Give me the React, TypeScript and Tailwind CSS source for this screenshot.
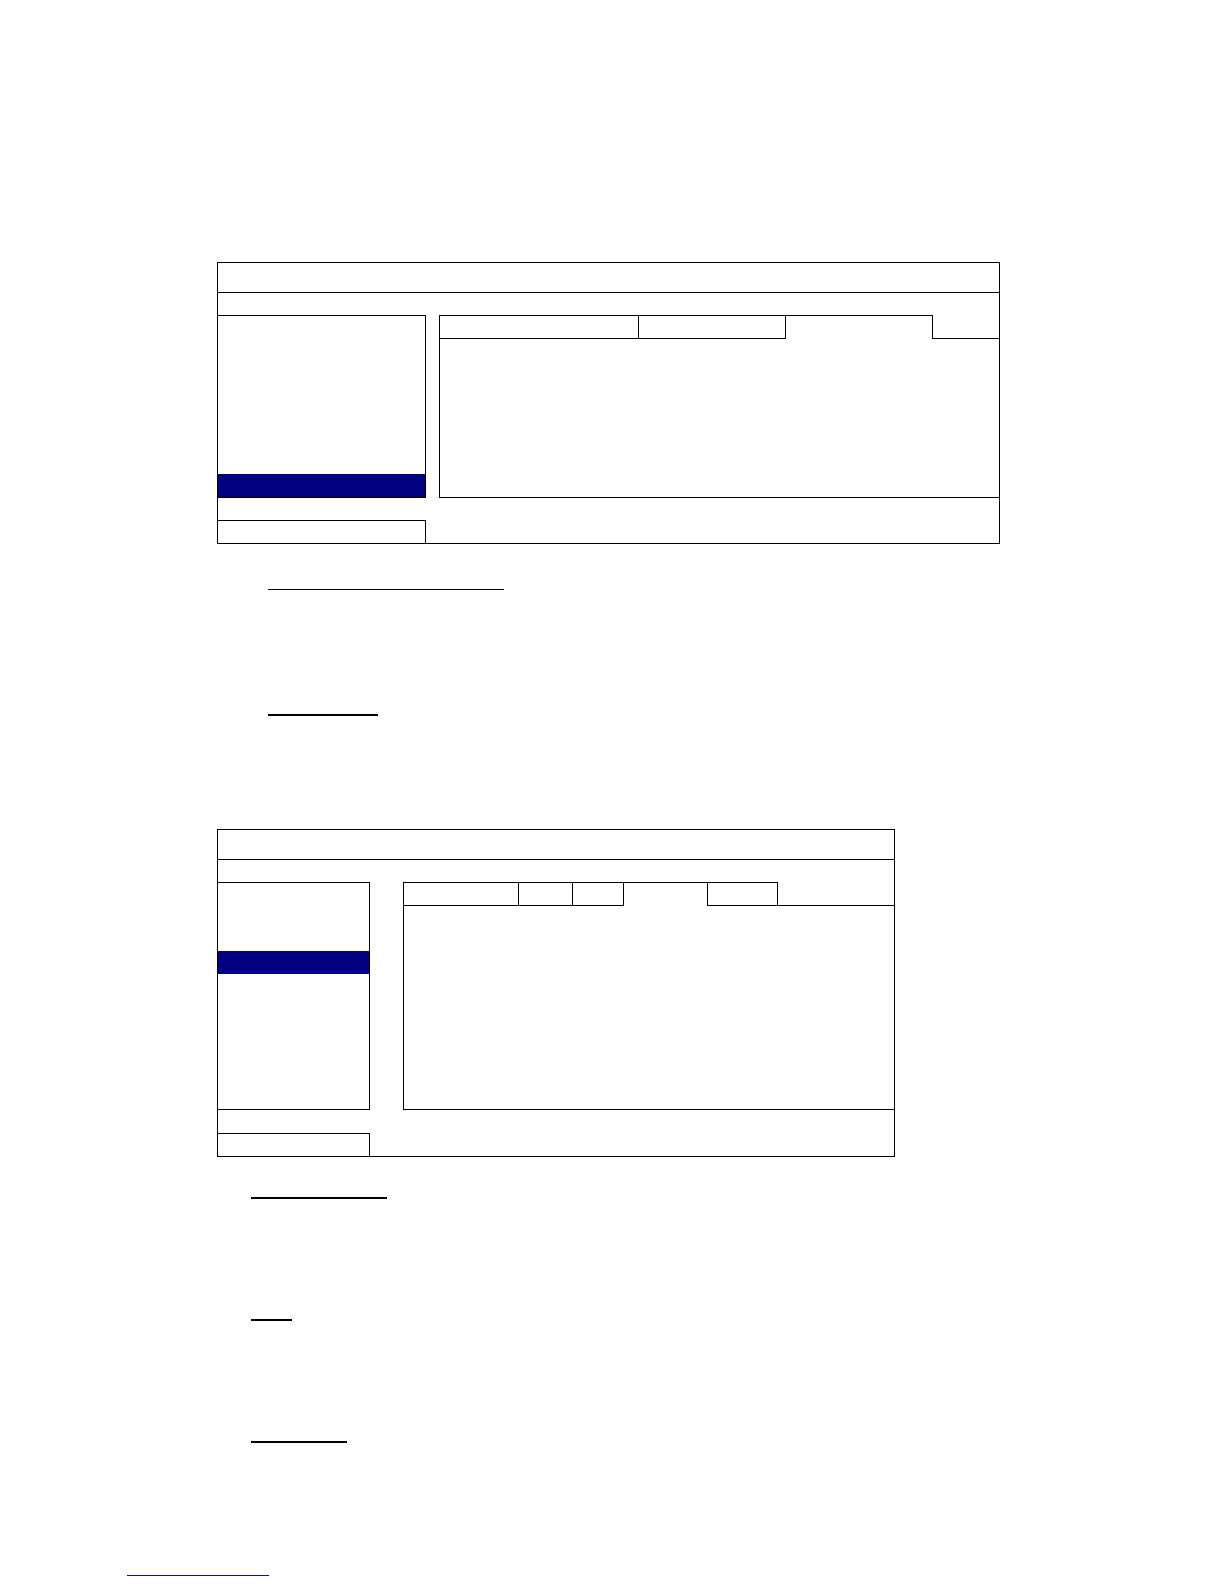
// manual page: two settings panels with underlined headings below them
import { useState } from 'react';

interface Tab {
  id: string;
  width: string;
}

interface PanelProps {
  name: string;
  maxWidth: string;
  menuWidth: string;
  menuHeight: string;
  columnGap: string;
  footerGap: string;
  itemCount: number;
  initialItem: number;
  tabs: Tab[];
  initialTab: number;
}

function SettingsPanel({
  name,
  maxWidth,
  menuWidth,
  menuHeight,
  columnGap,
  footerGap,
  itemCount,
  initialItem,
  tabs,
  initialTab,
}: PanelProps) {
  const [item, setItem] = useState(initialItem);
  const [tab, setTab] = useState(initialTab);

  return (
    <section aria-label={name} className={`w-full border border-black ${maxWidth}`}>
      <header className="h-[30px] border-b border-black" />
      <div className={`flex pt-[22px] ${columnGap}`}>
        <nav
          aria-label={`${name} menu`}
          className={`flex shrink-0 flex-col border-y border-r border-black ${menuWidth} ${menuHeight}`}
        >
          {Array.from({ length: itemCount }, (_, i) => (
            <button
              key={i}
              type="button"
              aria-label={`Item ${i + 1}`}
              onClick={() => setItem(i)}
              className={i === item ? 'h-[23px] shrink-0 bg-[#000080]' : 'flex-1'}
            />
          ))}
        </nav>
        <div className="flex min-w-0 flex-1 flex-col">
          <div role="tablist" className="flex h-6">
            {tabs.map((t, i) => (
              <button
                key={t.id}
                type="button"
                role="tab"
                aria-label={t.id}
                aria-selected={i === tab}
                onClick={() => setTab(i)}
                className={`border-t border-l border-black last-of-type:border-r ${t.width} ${i === tab ? '' : 'border-b'}`}
              />
            ))}
            <div className="flex-1 border-b border-black" />
          </div>
          <div role="tabpanel" className="flex-1 border-b border-l border-black" />
        </div>
      </div>
      <footer className={footerGap}>
        <button
          type="button"
          aria-label="Back"
          className={`block h-[23px] border-t border-r border-black ${menuWidth}`}
        />
      </footer>
    </section>
  );
}

const firstTabs: Tab[] = [
  { id: 'Tab 1', width: 'w-[199px]' },
  { id: 'Tab 2', width: 'w-[147px]' },
  { id: 'Tab 3', width: 'w-[148px]' },
];

const secondTabs: Tab[] = [
  { id: 'Tab 1', width: 'w-[115px]' },
  { id: 'Tab 2', width: 'w-[54px]' },
  { id: 'Tab 3', width: 'w-[51px]' },
  { id: 'Tab 4', width: 'w-[84px]' },
  { id: 'Tab 5', width: 'w-[71px]' },
];

export default function App() {
  return (
    <div className="bg-white px-[127px] pt-[262px] pb-2 font-['Liberation_Sans'] text-black">
      <main className="pl-[90px]">
        <SettingsPanel
          name="First settings"
          maxWidth="max-w-[783px]"
          menuWidth="w-[208px]"
          menuHeight="h-[183px]"
          columnGap="gap-[13px]"
          footerGap="pt-[22px]"
          itemCount={8}
          initialItem={7}
          tabs={firstTabs}
          initialTab={2}
        />
        <div className="pl-[51px]">
          <div className="h-[46px] w-[236px] border-b border-black" />
          <div className="h-[126px] w-[110px] border-b-2 border-black" />
        </div>
        <div className="pt-[113px]">
          <SettingsPanel
            name="Second settings"
            maxWidth="max-w-[678px]"
            menuWidth="w-[152px]"
            menuHeight="h-[228px]"
            columnGap="gap-[33px]"
            footerGap="pt-[23px]"
            itemCount={10}
            initialItem={3}
            tabs={secondTabs}
            initialTab={3}
          />
        </div>
        <div className="pl-[34px]">
          <div className="h-[42px] w-[136px] border-b-2 border-black" />
          <div className="h-[122px] w-[41px] border-b-2 border-black" />
          <div className="h-[122px] w-[96px] border-b-2 border-black" />
        </div>
      </main>
      <footer className="pt-[112px]">
        <a href="#top" aria-label="Back to top" className="block h-[21px] w-[142px] border-b border-[#10108a]" />
      </footer>
    </div>
  );
}
